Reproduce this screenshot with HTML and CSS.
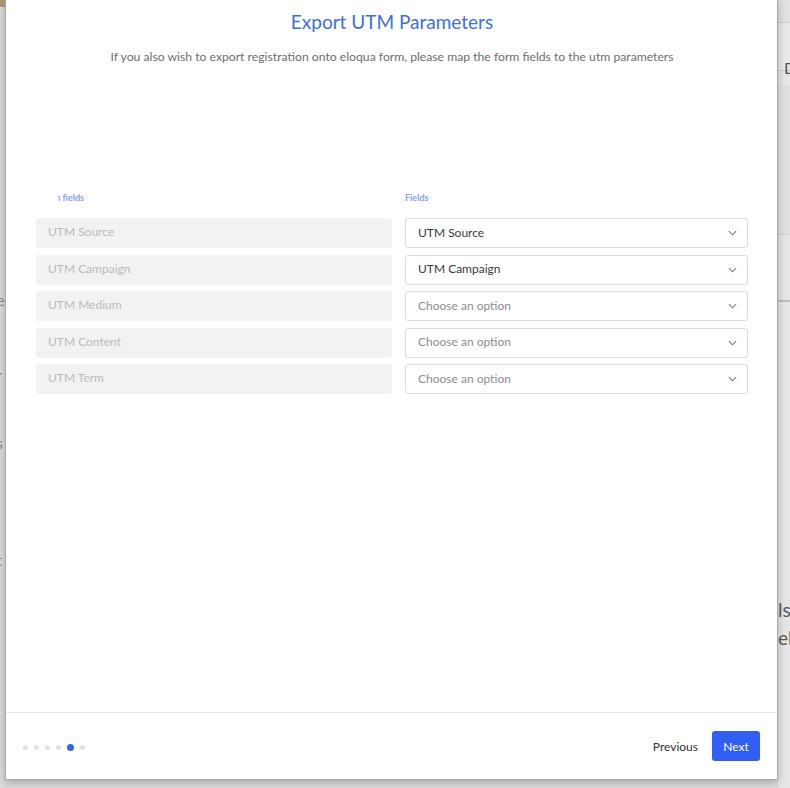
FILE: index.html
```html
<!DOCTYPE html>
<html lang="en">
<head>
    <meta charset="UTF-8">
    <meta name="viewport" content="width=device-width, initial-scale=1.0">
    <title>Export UTM Parameters</title>
    <link rel="stylesheet" href="styles.css">
</head>
<body>
    <!-- page behind the modal (dimmed) -->
    <div class="page">
        <div class="page-strip left">
            <span class="frag" style="top: 290px">e</span>
            <span class="frag" style="top: 325px">l</span>
            <span class="frag" style="top: 365px">r</span>
            <span class="frag" style="top: 433px">s</span>
            <span class="frag" style="top: 550px">t</span>
        </div>
        <div class="page-strip right">
            <div class="band top"></div>
            <div class="band head"><span class="frag-icon">D</span></div>
            <div class="band panel"></div>
            <div class="band rule"></div>
            <span class="frag big" style="top: 598px">ls</span>
            <span class="frag big" style="top: 626px">el</span>
        </div>
    </div>

    <div class="modal">
        <div class="modal-body">
            <h2 class="modal-title">Export UTM Parameters</h2>
            <p class="modal-subtitle">If you also wish to export registration onto eloqua form, please map the form fields to the utm parameters</p>

            <div class="map-grid">
                <label class="col-label"><span class="clip">Eloqua form fields</span></label>
                <label class="col-label">Fields</label>

                <div class="field-static">UTM Source</div>
                <div class="select">
                    <span class="value">UTM Source</span>
                    <svg class="chevron" viewBox="0 0 10 6"><path d="M1 1l4 4 4-4"/></svg>
                </div>

                <div class="field-static">UTM Campaign</div>
                <div class="select">
                    <span class="value">UTM Campaign</span>
                    <svg class="chevron" viewBox="0 0 10 6"><path d="M1 1l4 4 4-4"/></svg>
                </div>

                <div class="field-static">UTM Medium</div>
                <div class="select">
                    <span class="placeholder">Choose an option</span>
                    <svg class="chevron" viewBox="0 0 10 6"><path d="M1 1l4 4 4-4"/></svg>
                </div>

                <div class="field-static">UTM Content</div>
                <div class="select">
                    <span class="placeholder">Choose an option</span>
                    <svg class="chevron" viewBox="0 0 10 6"><path d="M1 1l4 4 4-4"/></svg>
                </div>

                <div class="field-static">UTM Term</div>
                <div class="select">
                    <span class="placeholder">Choose an option</span>
                    <svg class="chevron" viewBox="0 0 10 6"><path d="M1 1l4 4 4-4"/></svg>
                </div>
            </div>
        </div>

        <div class="modal-footer">
            <div class="steps">
                <span class="dot"></span>
                <span class="dot"></span>
                <span class="dot"></span>
                <span class="dot"></span>
                <span class="dot active"></span>
                <span class="dot"></span>
            </div>
            <div class="actions">
                <button class="btn-link">Previous</button>
                <button class="btn-primary">Next</button>
            </div>
        </div>
    </div>
</body>
</html>
```

FILE: styles.css
```css
body {
    margin: 0;
    height: 788px;
    overflow: hidden;
    background-color: #dedede;
    font-family: Lato, "Open Sans", Arial, sans-serif;
    position: relative;
}

/* dimmed page underneath */
.page {
    position: absolute;
    inset: 0;
}
.page-strip {
    position: absolute;
    top: 0;
    bottom: 0;
    background: #e3e3e3;
    overflow: hidden;
}
.page-strip.left {
    left: 0;
    width: 6px;
    background: linear-gradient(#b89a70 0, #b89a70 7px, #dcdcdc 7px);
}
.page-strip.right {
    left: 778px;
    right: 0;
    background: #e6e6e6;
}
.band {
    position: absolute;
    left: 0;
    right: 0;
}
.band.top {
    top: 0;
    height: 22px;
    border-bottom: 1px solid #cfcfcf;
    background: #e2e2e2;
}
.band.head {
    top: 23px;
    height: 47px;
    border-bottom: 1px solid #cfcfcf;
    background: #e9e9e9;
}
.band.panel {
    top: 86px;
    height: 148px;
    border-bottom: 1px solid #d2d2d2;
    background: #e0e0e0;
}
.band.rule {
    top: 300px;
    height: 2px;
    background: #bdbdbd;
}
.frag-icon {
    position: absolute;
    top: 35px;
    left: 6px;
    font-size: 16px;
    color: #555;
}
.frag {
    position: absolute;
    left: -4px;
    font-size: 16px;
    color: #888;
}
.frag.big {
    left: 0;
    font-size: 19px;
    color: #5a5a5a;
}

/* modal */
.modal {
    position: absolute;
    left: 5px;
    top: -2px;
    width: 773px;
    height: 782px;
    box-sizing: border-box;
    background: white;
    border: 1px solid #a8a8a8;
    box-shadow: 0 3px 8px rgba(0,0,0,0.25);
    display: flex;
    flex-direction: column;
}
.modal-body {
    flex: 1;
    padding: 11px 29px 0 30px;
}
.modal-title {
    margin: 0;
    text-align: center;
    font-size: 19px;
    line-height: 24px;
    font-weight: 400;
    color: #3d6fe0;
}
.modal-subtitle {
    margin: 15px 0 0;
    text-align: center;
    font-size: 12.2px;
    line-height: 16px;
    color: #6e6e6e;
}

.map-grid {
    margin-top: 127px;
    display: grid;
    grid-template-columns: 356px 343px;
    column-gap: 13px;
    row-gap: 6.5px;
}
.col-label {
    font-size: 9px;
    font-weight: bold;
    line-height: 12px;
    color: #85a3f0;
    margin-bottom: 7.5px;
}
.col-label .clip {
    display: inline-block;
    width: 26px;
    margin-left: 22px;
    overflow: hidden;
    white-space: nowrap;
    direction: rtl;
    vertical-align: top;
}
.field-static {
    height: 30px;
    box-sizing: border-box;
    padding: 0 12px 2px;
    border-radius: 3px;
    background: #f2f2f2;
    color: #bababa;
    font-size: 12px;
    line-height: 28px;
}
.select {
    height: 30px;
    box-sizing: border-box;
    padding: 0 10px 2px 12px;
    border: 1px solid #dcdcdc;
    border-radius: 3px;
    background: white;
    display: flex;
    align-items: center;
    justify-content: space-between;
    font-size: 12px;
}
.select .value {
    color: #3a3a3a;
}
.select .placeholder {
    color: #8e8e8e;
}
.chevron {
    width: 9px;
    height: 6px;
    margin-top: 2px;
    fill: none;
    stroke: #777;
    stroke-width: 1.2;
}

/* footer */
.modal-footer {
    height: 66px;
    border-top: 1px solid #e6e6e6;
    display: flex;
    align-items: center;
    justify-content: space-between;
    padding: 0 17px 0 17px;
}
.steps {
    display: flex;
    align-items: center;
    gap: 6px;
    margin-top: 2px;
}
.dot {
    width: 5px;
    height: 5px;
    border-radius: 50%;
    background: #e3e3e3;
}
.dot.active {
    width: 7px;
    height: 7px;
    background: #2f6ae6;
}
.actions {
    display: flex;
    align-items: center;
    gap: 10px;
}
.btn-link {
    background: none;
    border: none;
    padding: 0 4px;
    font-family: inherit;
    font-size: 12px;
    color: #333;
    cursor: pointer;
}
.btn-primary {
    width: 48px;
    height: 30px;
    border: none;
    border-radius: 3px;
    background: #2f5ff5;
    color: white;
    font-family: inherit;
    font-size: 12px;
    cursor: pointer;
}
```
